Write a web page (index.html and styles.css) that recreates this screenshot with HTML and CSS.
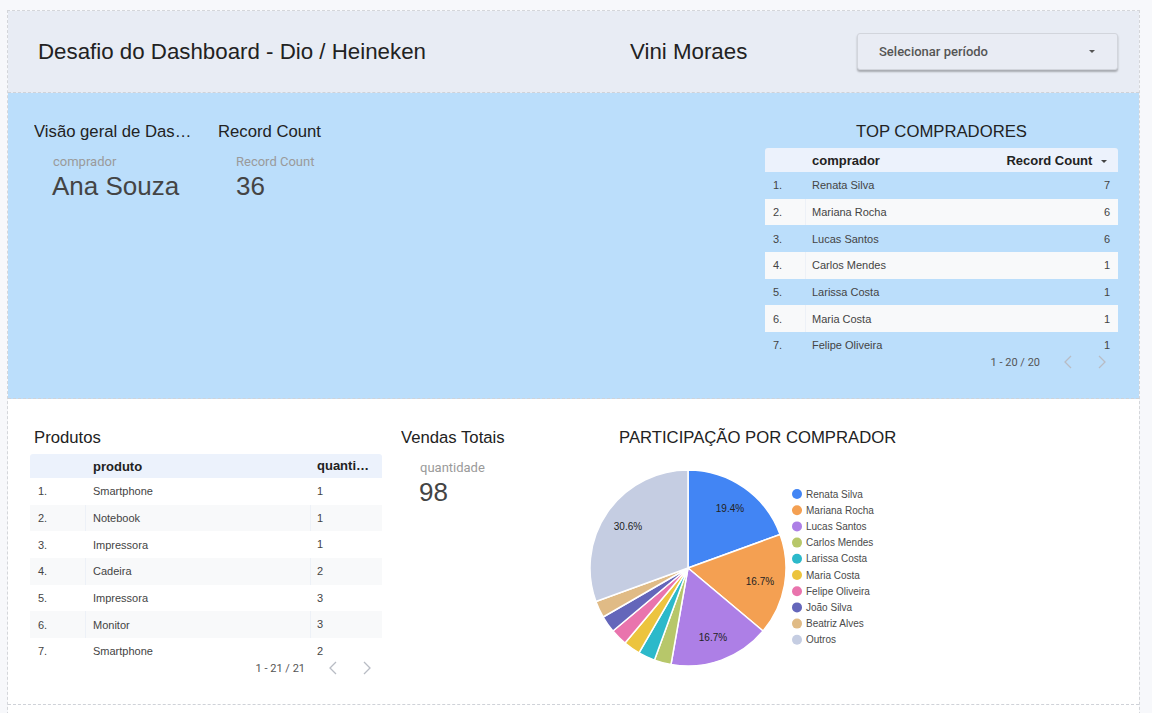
FILE: index.html
```html
<!DOCTYPE html>
<html lang="pt">
<head>
<meta charset="utf-8">
<title>Desafio do Dashboard</title>
<link rel="stylesheet" href="styles.css">
</head>
<body>
<div class="canvas">
  <header class="hdr">
    <h1 class="hdr-title">Desafio do Dashboard - Dio / Heineken</h1>
    <div class="hdr-name">Vini Moraes</div>
    <div class="dropdown">
      <span>Selecionar período</span>
      <span class="caret"></span>
    </div>
  </header>

  <section class="band band-blue">
    <div class="card">
      <div class="card-title">Visão geral de Dashboard</div>
      <div class="card-label">comprador</div>
      <div class="card-value">Ana Souza</div>
    </div>
    <div class="card card2">
      <div class="card-title">Record Count</div>
      <div class="card-label">Record Count</div>
      <div class="card-value">36</div>
    </div>

    <div class="tbl-block tbl-top">
      <div class="tbl-caption">TOP COMPRADORES</div>
      <div class="tbl">
        <div class="tr th">
          <div class="c-idx"></div>
          <div class="c-name">comprador</div>
          <div class="c-num">Record Count <span class="sort"></span></div>
        </div>
        <div class="tbody">
          <div class="tr"><div class="c-idx">1.</div><div class="c-name">Renata Silva</div><div class="c-num">7</div></div>
          <div class="tr"><div class="c-idx">2.</div><div class="c-name">Mariana Rocha</div><div class="c-num">6</div></div>
          <div class="tr"><div class="c-idx">3.</div><div class="c-name">Lucas Santos</div><div class="c-num">6</div></div>
          <div class="tr"><div class="c-idx">4.</div><div class="c-name">Carlos Mendes</div><div class="c-num">1</div></div>
          <div class="tr"><div class="c-idx">5.</div><div class="c-name">Larissa Costa</div><div class="c-num">1</div></div>
          <div class="tr"><div class="c-idx">6.</div><div class="c-name">Maria Costa</div><div class="c-num">1</div></div>
          <div class="tr"><div class="c-idx">7.</div><div class="c-name">Felipe Oliveira</div><div class="c-num">1</div></div>
        </div>
      </div>
      <div class="pager">
        <span class="pg-text">1 - 20 / 20</span>
        <svg class="chev" width="10" height="14" viewBox="0 0 10 14"><polyline points="8,1 2,7 8,13" /></svg>
        <svg class="chev" width="10" height="14" viewBox="0 0 10 14"><polyline points="2,1 8,7 2,13" /></svg>
      </div>
    </div>
  </section>

  <section class="band band-white">
    <div class="tbl-block tbl-prod">
      <div class="tbl-caption">Produtos</div>
      <div class="tbl">
        <div class="tr th">
          <div class="c-idx"></div>
          <div class="c-name">produto</div>
          <div class="c-qty">quantidade</div>
        </div>
        <div class="tbody">
          <div class="tr"><div class="c-idx">1.</div><div class="c-name">Smartphone</div><div class="c-qty">1</div></div>
          <div class="tr"><div class="c-idx">2.</div><div class="c-name">Notebook</div><div class="c-qty">1</div></div>
          <div class="tr"><div class="c-idx">3.</div><div class="c-name">Impressora</div><div class="c-qty">1</div></div>
          <div class="tr"><div class="c-idx">4.</div><div class="c-name">Cadeira</div><div class="c-qty">2</div></div>
          <div class="tr"><div class="c-idx">5.</div><div class="c-name">Impressora</div><div class="c-qty">3</div></div>
          <div class="tr"><div class="c-idx">6.</div><div class="c-name">Monitor</div><div class="c-qty">3</div></div>
          <div class="tr"><div class="c-idx">7.</div><div class="c-name">Smartphone</div><div class="c-qty">2</div></div>
        </div>
      </div>
      <div class="pager">
        <span class="pg-text">1 - 21 / 21</span>
        <svg class="chev" width="10" height="14" viewBox="0 0 10 14"><polyline points="8,1 2,7 8,13" /></svg>
        <svg class="chev" width="10" height="14" viewBox="0 0 10 14"><polyline points="2,1 8,7 2,13" /></svg>
      </div>
    </div>

    <div class="card card-sales">
      <div class="card-title">Vendas Totais</div>
      <div class="card-label">quantidade</div>
      <div class="card-value">98</div>
    </div>

    <div class="chart">
      <div class="chart-title">PARTICIPAÇÃO POR COMPRADOR</div>
      <svg class="pie" width="300" height="200" viewBox="0 0 300 200">
        <g stroke="#ffffff" stroke-width="1.5" stroke-linejoin="round">
          <path fill="#4285f4" d="M100,100 L100,2 A98,98 0 0 1 192.09,66.48 Z"/>
          <path fill="#f4a052" d="M100,100 L192.09,66.48 A98,98 0 0 1 175.07,163 Z"/>
          <path fill="#ad7fe6" d="M100,100 L175.07,163 A98,98 0 0 1 82.98,196.51 Z"/>
          <path fill="#b7c76a" d="M100,100 L82.98,196.51 A98,98 0 0 1 66.48,192.09 Z"/>
          <path fill="#2cb9ca" d="M100,100 L66.48,192.09 A98,98 0 0 1 51,184.87 Z"/>
          <path fill="#ecc43e" d="M100,100 L51,184.87 A98,98 0 0 1 37,175.07 Z"/>
          <path fill="#e974ad" d="M100,100 L37,175.07 A98,98 0 0 1 24.93,163 Z"/>
          <path fill="#6466ba" d="M100,100 L24.93,163 A98,98 0 0 1 15.13,149 Z"/>
          <path fill="#e0bb86" d="M100,100 L15.13,149 A98,98 0 0 1 7.91,133.52 Z"/>
          <path fill="#c5cde2" d="M100,100 L7.91,133.52 A98,98 0 0 1 100,2 Z"/>
        </g>
        <g class="pie-lbl" text-anchor="middle">
          <text x="142" y="44">19.4%</text>
          <text x="172" y="117">16.7%</text>
          <text x="125" y="173">16.7%</text>
          <text x="40" y="62">30.6%</text>
        </g>
        <g class="legend">
          <circle cx="209" cy="26" r="5" fill="#4285f4"/><text x="218" y="29.5">Renata Silva</text>
          <circle cx="209" cy="42.2" r="5" fill="#f4a052"/><text x="218" y="45.7">Mariana Rocha</text>
          <circle cx="209" cy="58.4" r="5" fill="#ad7fe6"/><text x="218" y="61.9">Lucas Santos</text>
          <circle cx="209" cy="74.6" r="5" fill="#b7c76a"/><text x="218" y="78.1">Carlos Mendes</text>
          <circle cx="209" cy="90.8" r="5" fill="#2cb9ca"/><text x="218" y="94.3">Larissa Costa</text>
          <circle cx="209" cy="107" r="5" fill="#ecc43e"/><text x="218" y="110.5">Maria Costa</text>
          <circle cx="209" cy="123.2" r="5" fill="#e974ad"/><text x="218" y="126.7">Felipe Oliveira</text>
          <circle cx="209" cy="139.4" r="5" fill="#6466ba"/><text x="218" y="142.9">João Silva</text>
          <circle cx="209" cy="155.6" r="5" fill="#e0bb86"/><text x="218" y="159.1">Beatriz Alves</text>
          <circle cx="209" cy="171.8" r="5" fill="#c5cde2"/><text x="218" y="175.3">Outros</text>
        </g>
      </svg>
    </div>
  </section>

  <section class="band band-rest"></section>
</div>
</body>
</html>
```
FILE: styles.css
```css
* { box-sizing: border-box; }
html, body { margin: 0; padding: 0; }
body {
  background: #f7f8fb;
  font-family: "Liberation Sans", Arial, sans-serif;
  color: #222;
  overflow: hidden;
  height: 713px;
}
.canvas {
  margin: 10px 0 0 7px;
  width: 1133px;
  border: 1px dashed #d4d6da;
  border-bottom: none;
}

/* header */
.hdr {
  height: 82px;
  background: #e8ecf4;
  border-bottom: 1px dashed #cfd2d8;
  display: flex;
  align-items: center;
}
.hdr-title {
  margin: 0;
  padding-left: 30px;
  width: 622px;
  font-size: 22.3px;
  font-weight: 400;
  color: #222;
}
.hdr-name {
  width: 227px;
  font-size: 22.3px;
  color: #222;
}
.dropdown {
  width: 261px;
  height: 37px;
  margin-top: -1px;
  background: #e9ecf4;
  border: 1px solid #d2d5dc;
  border-radius: 3px;
  box-shadow: 0 2px 2px rgba(0,0,0,0.28);
  display: flex;
  align-items: center;
  justify-content: space-between;
  padding: 0 22px 0 21px;
  font-family: Roboto, "Liberation Sans", sans-serif;
  font-weight: 500;
  font-size: 13px;
  color: #555;
}
.caret {
  width: 0; height: 0;
  border-left: 3px solid transparent;
  border-right: 3px solid transparent;
  border-top: 3px solid #555;
  margin-top: 1px;
}

/* bands */
.band {
  height: 306px;
  border-bottom: 1px dashed #cfd2d8;
  display: flex;
  align-items: flex-start;
  padding-top: 29px;
}
.band-blue { background: #bbdefb; }
.band-white { background: #ffffff; }
.band-rest { background: #ffffff; height: 40px; border-bottom: none; }

/* scorecards */
.card { width: 158px; margin-left: 26px; }
.card2 { margin-left: 26px; }
.card-title {
  font-size: 16.7px;
  line-height: 20px;
  white-space: nowrap;
  overflow: hidden;
  text-overflow: ellipsis;
  color: #222;
}
.card-label {
  margin-top: 12px;
  padding-left: 19px;
  font-family: Roboto, "Liberation Sans", sans-serif;
  font-size: 13px;
  line-height: 16px;
  color: #9a9a9a;
}
.card2 .card-label, .card2 .card-value { padding-left: 18px; }
.card-value {
  padding-left: 18px;
  margin-top: 1px;
  font-size: 26px;
  line-height: 30px;
  color: #444;
}

/* tables */
.tbl-block { display: flex; flex-direction: column; }
.tbl-top { width: 353px; margin-left: auto; margin-right: 21px; }
.tbl-caption {
  font-size: 16.7px;
  line-height: 20px;
  color: #222;
}
.tbl-top .tbl-caption { text-align: center; }
.tbl { margin-top: 6px; font-family: "Liberation Sans", Arial, sans-serif; }
.tr { display: flex; align-items: center; height: 26.67px; font-size: 11px; color: #444; }
.tr.th {
  height: 24px;
  background: #ecf2fc;
  border-radius: 3px 3px 0 0;
  font-size: 13px;
  font-weight: 700;
  color: #222;
}
.tbody { height: 180px; overflow: hidden; }
.tbody .tr:nth-child(even) { background: #f8f9fa; }
.tbody .tr:nth-child(even) .c-name,
.tbody .tr:nth-child(even) .c-qty { box-shadow: inset 1px 0 0 #edf1f7; }
.c-idx { padding-left: 8px; }
.c-name { padding-left: 7px; align-self: stretch; display: flex; align-items: center; }
.c-num { flex: 1; text-align: right; padding-right: 8px; }
.c-qty { padding-left: 7px; padding-right: 10px; align-self: stretch; overflow: hidden; white-space: nowrap; text-overflow: ellipsis; }
.tbl-top .c-idx { width: 40px; }
.tbl-top .c-name { width: 180px; }
.sort {
  display: inline-block;
  width: 0; height: 0;
  margin-left: 5px;
  vertical-align: 2px;
  border-left: 3px solid transparent;
  border-right: 3px solid transparent;
  border-top: 3px solid #444;
}
.tbl-top .th .c-num { padding-right: 11px; }

.tbl-prod { width: 352px; margin-left: 22px; }
.tbl-prod .tbl-caption { padding-left: 4px; }
.tbl-prod .c-idx { width: 55px; }
.tbl-prod .c-name { width: 225px; padding-left: 8px; }
.tbl-prod .c-qty { width: 72px; display: block; line-height: 26.67px; }
.tbl-prod .th .c-qty { line-height: 24px; }

.pager {
  height: 20px;
  display: flex;
  align-items: center;
  justify-content: flex-end;
  font-family: Roboto, "Liberation Sans", sans-serif;
  font-size: 11px;
  color: #555;
}
.tbl-top .pager { padding-right: 11px; }
.tbl-prod .pager { padding-right: 10px; }
.pg-text { margin-right: 23px; }
.chev { fill: none; stroke: #b8bcc4; stroke-width: 1.3; }
.chev + .chev { margin-left: 24px; }

/* vendas */
.card-sales { width: 189px; margin-left: 19px; }

/* chart */
.chart { display: flex; flex-direction: column; }
.chart-title {
  padding-left: 29px;
  font-size: 16.7px;
  line-height: 20px;
  color: #222;
  white-space: nowrap;
}
.pie { margin-top: 20px; margin-left: -2px; display: block; }
.pie-lbl { font-family: "Liberation Sans", Arial, sans-serif; font-size: 10px; fill: #222; }
.legend text { font-family: "Liberation Sans", Arial, sans-serif; font-size: 10px; fill: #4a4a4a; }
```
